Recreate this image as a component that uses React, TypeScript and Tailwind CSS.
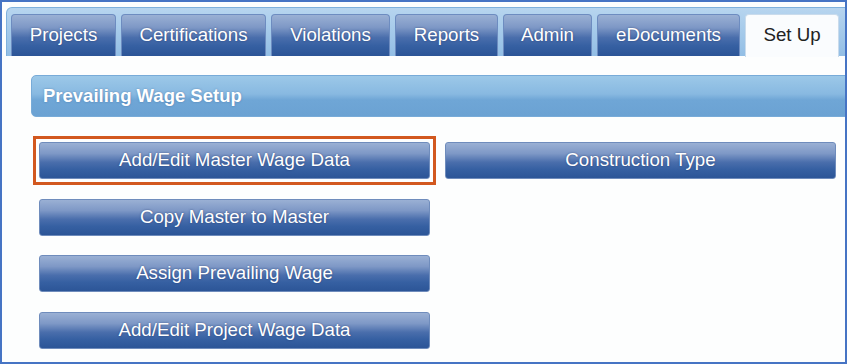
const tabs = [
  { label: "Projects", w: "w-[105px]" },
  { label: "Certifications", w: "w-[145px]" },
  { label: "Violations", w: "w-[119px]" },
  { label: "Reports", w: "w-[103px]" },
  { label: "Admin", w: "w-[89px]" },
  { label: "eDocuments", w: "w-[143px]" },
];

const blueFill =
  "bg-[linear-gradient(to_bottom,#9ab0d4_0%,#7e98c6_30%,#4a6eac_55%,#3660a2_75%,#2c5597_100%)]";

const WageButton = ({ label, highlight }: { label: string; highlight?: boolean }) => {
  return (
    <div className="relative">
      <button
        type="button"
        className={`h-[37px] w-full rounded-[3px] border border-[#6f8cbc] ${blueFill} text-[18.7px] text-white [text-shadow:0_0_2px_rgba(20,40,90,0.6)]`}
      >
        {label}
      </button>
      {highlight && (
        <span className="pointer-events-none absolute -inset-[6px] border-[3px] border-[#d2581f]" />
      )}
    </div>
  );
};

const App = () => {
  return (
    <div className="w-[847px] h-[364px] border-2 border-[#4674c4] bg-[#fdfefe] overflow-hidden font-['Liberation_Sans',Arial,sans-serif]">
      {/* tab strip */}
      <div className="ml-[4px] mr-[-6px] mt-[5px] h-[49px] rounded-tl-[6px] border border-b-0 border-[#7fb1dd] bg-[linear-gradient(to_bottom,#b7d5ef,#92bee5)] pl-[4px] pt-[5px] flex items-end gap-[5px]">
        {tabs.map((t) => (
          <div
            key={t.label}
            className={`${t.w} h-[42px] pb-[1px] rounded-t-[4px] border border-b-0 border-[#6d8cc0] ${blueFill} flex items-center justify-center text-[18.7px] text-white [text-shadow:0_0_2px_rgba(20,40,90,0.6)]`}
          >
            {t.label}
          </div>
        ))}
        <div className="w-[94px] h-[43px] mb-[-1px] pb-[2px] rounded-t-[4px] border border-b-0 border-[#c9dbec] bg-[#fafcfe] flex items-center justify-center text-[18.7px] text-[#222]">
          Set Up
        </div>
      </div>

      {/* section header */}
      <div className="ml-[29px] mr-[-6px] mt-[19px] h-[42px] rounded-l-[5px] border border-[#78abd8] bg-[linear-gradient(to_bottom,#9cc8e8_0%,#88b9e1_45%,#6fa6d6_60%,#6ba2d3_100%)] flex items-center pl-[11px] text-[18.5px] font-bold text-white [text-shadow:0_0_2px_rgba(40,80,130,0.5)]">
        Prevailing Wage Setup
      </div>

      {/* buttons */}
      <div className="ml-[37px] mt-[25px] grid grid-cols-[391px_391px] gap-x-[15px] gap-y-[19.5px]">
        <WageButton label="Add/Edit Master Wage Data" highlight />
        <WageButton label="Construction Type" />
        <WageButton label="Copy Master to Master" />
        <div />
        <WageButton label="Assign Prevailing Wage" />
        <div />
        <WageButton label="Add/Edit Project Wage Data" />
        <div />
      </div>
    </div>
  );
};

export default App;
